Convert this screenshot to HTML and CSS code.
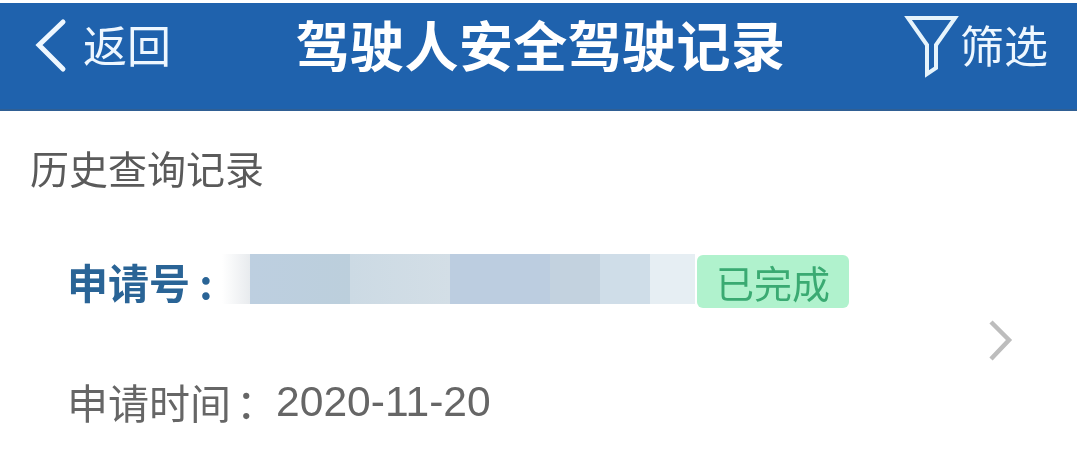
FILE: index.html
```html
<!DOCTYPE html>
<html lang="zh-CN">
<head>
<meta charset="utf-8">
<title>驾驶人安全驾驶记录</title>
<link rel="stylesheet" href="styles.css">
</head>
<body>
<header class="bar">
  <div class="back">
    <svg class="back-icon" width="36" height="56" viewBox="0 0 36 56"><path d="M30 4 L6 27 L30 51" fill="none" stroke="#eef7ff" stroke-width="5" stroke-linecap="round" stroke-linejoin="miter"/></svg>
    <span>返回</span>
  </div>
  <h1 class="title">驾驶人安全驾驶记录</h1>
  <div class="filter">
    <svg class="filter-icon" width="56" height="64" viewBox="0 0 56 64"><path d="M4 4 H51 L32 31 V54 L23 60 V31 Z" fill="none" stroke="#e6f4fc" stroke-width="4"/></svg>
    <span>筛选</span>
  </div>
</header>
<main class="content">
  <h2 class="section">历史查询记录</h2>
  <div class="record">
    <div class="record-main">
      <div class="row-top">
        <span class="label">申请号 :</span>
        <div class="mask">
          <i class="fade"></i><i class="s1"></i><i class="s2"></i><i class="s3"></i><i class="s4"></i><i class="s5"></i><i class="s6"></i>
        </div>
        <span class="badge">已完成</span>
      </div>
      <div class="row-bottom">
        <span class="time-label">申请时间<span class="colon">：</span></span><span class="date">2020-11-20</span>
      </div>
    </div>
    <svg class="chevron" width="28" height="44" viewBox="0 0 28 44"><path d="M4 3 L22 21 L4 40" fill="none" stroke="#bdbdbd" stroke-width="4.5"/></svg>
  </div>
</main>
</body>
</html>
```
FILE: styles.css
```css
* { box-sizing: border-box; }
html, body { margin: 0; padding: 0; }
body {
  width: 1080px;
  height: 459px;
  overflow: hidden;
  background: #fff;
  font-family: "Noto Sans CJK SC", "Noto Sans", sans-serif;
  padding: 3px 3px 0 0;
}
.bar {
  height: 108px;
  background: #1f62ad;
  border-bottom: 2px solid #2f5f94;
  color: #eef7ff;
  display: grid;
  grid-template-columns: 1fr auto 1fr;
  align-items: center;
  padding: 0 29px 24px 33px;
}
.back, .filter { display: flex; align-items: center; font-size: 44px; line-height: 1; }
.back { gap: 14px; }
.back-icon { margin-top: 4px; }
.filter { justify-content: flex-end; gap: 0; }
.filter-icon { margin-top: 4px; }
.title {
  margin: 0;
  font-size: 54px;
  letter-spacing: 0.4px;
  line-height: 1;
  font-weight: 700;
  color: #fff;
  filter: blur(0.4px);
}
.back span, .filter span, .section, .label, .badge, .row-bottom { filter: blur(0.4px); }
.content { padding: 31px 0 0 28px; }
.section {
  margin: 0 0 0 2px;
  font-size: 39px;
  line-height: 50px;
  font-weight: 400;
  color: #5a5a5a;
}
.record {
  display: flex;
  align-items: center;
  margin-top: 61px;
  padding-left: 40px;
}
.record-main { width: 919px; }
.row-top { display: flex; align-items: center; height: 56px; }
.label {
  width: 154px;
  font-size: 41px;
  line-height: 1;
  font-weight: 700;
  color: #2a6496;
  white-space: nowrap;
  margin-left: -1px;
  margin-right: 1px;
}
.mask { display: flex; height: 50px; align-self: flex-start; margin-top: 1px; }
.mask i { display: block; height: 100%; }
.fade { width: 28px; background: linear-gradient(90deg, #fff, #e8ebee); }
.s1 { width: 100px; background: linear-gradient(90deg, #bdcfe0, #bccfdc); }
.s2 { width: 100px; background: linear-gradient(90deg, #ccdae4, #d3dee6); }
.s3 { width: 100px; background: #bccde0; }
.s4 { width: 50px; background: #c3d2df; }
.s5 { width: 50px; background: #cfdde8; }
.s6 { width: 45px; background: #e6eef3; }
.badge {
  margin-left: 2px;
  width: 152px;
  height: 53px;
  border-radius: 6px;
  background: #b0f2cd;
  color: #3aaa72;
  font-size: 38px;
  line-height: 53px;
  text-align: center;
}
.row-bottom { margin-top: 71px; display: flex; align-items: center; line-height: 1; color: #666; }
.time-label { font-size: 41px; width: 209px; white-space: nowrap; margin-left: -1px; }
.colon { margin-left: 5px; }
.date { font-family: "Liberation Sans", sans-serif; font-size: 42.6px; }
.chevron { margin-top: 6px; }
```
